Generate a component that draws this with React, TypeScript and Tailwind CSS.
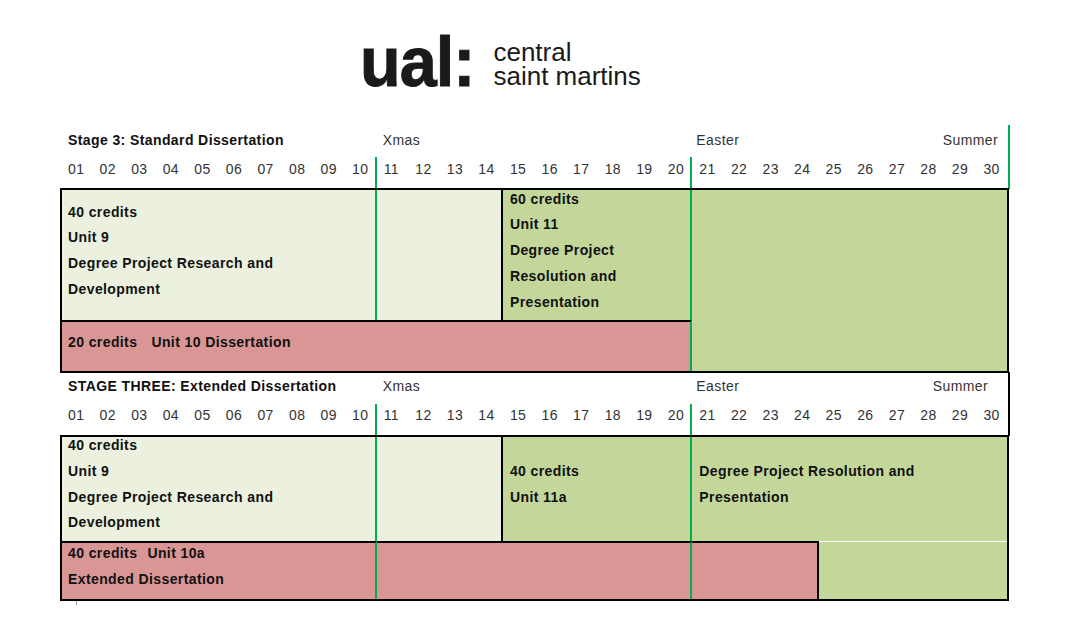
import clsx from "clsx"

const weeks = Array.from({ length: 30 }, (_, i) => String(i + 1).padStart(2, "0"))

const cols = "grid grid-cols-[repeat(30,minmax(0,1fr))]"

function TitleRow({ title, summerPad, top, edge }: { title: string; summerPad: string; top: string; edge: string }) {
  return (
    <div className={clsx(cols, "w-[949px] h-[32px] border-r-2", edge)}>
      <div className={clsx("col-span-10 pl-[7px] font-bold text-[#111] leading-[16px] whitespace-nowrap", top)}>{title}</div>
      <div className={clsx("col-span-10 pl-[6px] leading-[16px]", top)}>Xmas</div>
      <div className={clsx("col-span-10 pl-[4px] flex justify-between leading-[16px]", top, summerPad)}>
        <span>Easter</span>
        <span>Summer</span>
      </div>
    </div>
  )
}

function WeekRow({ top, edge }: { top: string; edge: string }) {
  return (
    <div className={clsx(cols, "w-[949px] h-[32px] border-r-2", edge)}>
      {weeks.map((w, i) => (
        <div
          key={w}
          className={clsx("pl-[7px] leading-[16px]", top, (i === 9 || i === 19) && "border-r-2 border-[#00b050]")}
        >
          {w}
        </div>
      ))}
    </div>
  )
}

function Lines({ lines }: { lines: string[] }) {
  return (
    <div className="font-bold text-[#111] leading-[25.75px] whitespace-nowrap">
      {lines.map((l) => (
        <div key={l}>{l}</div>
      ))}
    </div>
  )
}

export default function App() {
  return (
    <div className="w-[1066px] h-[642px] bg-white font-['Liberation_Sans',Arial,sans-serif] text-[14px] tracking-[0.4px] text-[#333]">
      {/* logo */}
      <div className="h-[125px] pt-[27px] pl-[360px] flex items-start text-[#1a1a1a] tracking-normal">
        <span className="inline-block origin-left scale-x-[0.95] text-[70px] leading-[70px] font-bold tracking-[-1px] [-webkit-text-stroke:1px_#1a1a1a]">
          ual:
        </span>
        <div className="ml-[13px] mt-[13px] text-[26px] leading-[24px]">
          <div>central</div>
          <div>saint martins</div>
        </div>
      </div>

      <div className="ml-[61px]">
        {/* Stage 3: standard */}
        <TitleRow title="Stage 3: Standard Dissertation" summerPad="pr-[10px]" top="pt-[7px]" edge="border-[#00b050]" />
        <WeekRow top="pt-[4px]" edge="border-[#00b050]" />

        <div className={clsx(cols, "w-[947px] h-[183px] grid-rows-[131px_52px] outline-2 outline-black -outline-offset-1")}>
          <div className="col-span-10 bg-[#ebf1de] border-r-2 border-[#00b050] pl-[7px] pb-[7px] flex items-center">
            <Lines lines={["40 credits", "Unit 9", "Degree Project Research and", "Development"]} />
          </div>
          <div className="col-span-4 bg-[#ebf1de] border-r-2 border-black" />
          <div className="col-span-6 bg-[#c4d79b] border-r-2 border-[#00b050] pl-[7px] pb-[7px] flex items-center">
            <Lines lines={["60 credits", "Unit 11", "Degree Project", "Resolution and", "Presentation"]} />
          </div>
          <div className="col-span-10 row-span-2 bg-[#c4d79b]" />
          <div className="col-span-20 bg-[#da9694] border-t-2 border-black border-r-2 border-r-[#00b050] pl-[7px] pb-[9px] flex items-center font-bold text-[#111] whitespace-nowrap">
            <span>20 credits</span>
            <span className="ml-[14px]">Unit 10 Dissertation</span>
          </div>
        </div>

        {/* Stage three: extended */}
        <TitleRow title="STAGE THREE: Extended Dissertation" summerPad="pr-[20px]" top="pt-[6px]" edge="border-black" />
        <WeekRow top="pt-[3px]" edge="border-black" />

        <div className={clsx(cols, "w-[947px] h-[164px] grid-rows-[105px_59px] outline-2 outline-black -outline-offset-1")}>
          <div className="col-span-10 bg-[#ebf1de] border-r-2 border-[#00b050] pl-[7px] pb-[8px] flex items-center">
            <Lines lines={["40 credits", "Unit 9", "Degree Project Research and", "Development"]} />
          </div>
          <div className="col-span-4 bg-[#ebf1de] border-r-2 border-black" />
          <div className="col-span-6 bg-[#c4d79b] border-r-2 border-[#00b050] pl-[7px] pb-[8px] flex items-center">
            <Lines lines={["40 credits", "Unit 11a"]} />
          </div>
          <div className="col-span-10 bg-[#c4d79b] pl-[7px] pb-[8px] flex items-center">
            <Lines lines={["Degree Project Resolution and", "Presentation"]} />
          </div>

          <div className="col-span-10 bg-[#da9694] border-t-2 border-black border-r-2 border-r-[#00b050] pl-[7px] pb-[10px] flex items-center">
            <div className="font-bold text-[#111] leading-[25.75px] whitespace-nowrap">
              <div>
                40 credits<span className="ml-[10px]">Unit 10a</span>
              </div>
              <div>Extended Dissertation</div>
            </div>
          </div>
          <div className="col-span-10 bg-[#da9694] border-t-2 border-black border-r-2 border-r-[#00b050]" />
          <div className="col-span-4 bg-[#da9694] border-t-2 border-black border-r-2" />
          <div className="col-span-6 bg-[#c4d79b] border-t border-white" />
        </div>

        <div className="ml-[15px] w-px h-[5px] bg-[#999]" />
      </div>
    </div>
  )
}
